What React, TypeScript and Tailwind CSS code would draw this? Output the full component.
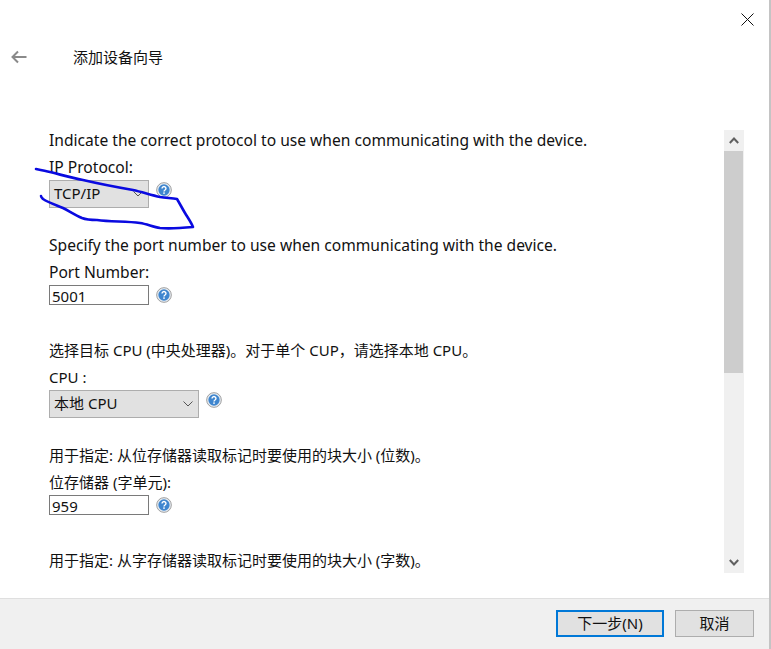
const FONT = "font-['Noto_Sans','Noto_Sans_CJK_SC',sans-serif]";

function HelpIcon() {
  return (
    <svg width="16" height="16" viewBox="0 0 17 17" className="mt-0.5 shrink-0">
      <circle cx="8.5" cy="8.5" r="7.8" fill="#e8eef4" stroke="#9a9a9a" strokeWidth="1" />
      <circle cx="8.5" cy="8.5" r="6" fill="#3f86cf" />
      <path d="M6.4 6.8a2.1 2 0 1 1 3.2 1.7c-.8.5-1.1.8-1.1 1.6" fill="none" stroke="#fff" strokeWidth="1.5" />
      <rect x="7.7" y="11" width="1.6" height="1.6" fill="#fff" />
    </svg>
  );
}

function Chevron() {
  return (
    <svg width="10" height="6" viewBox="0 0 10 6" className="shrink-0">
      <path d="M0.5 0.5 5 5l4.5-4.5" fill="none" stroke="#555" strokeWidth="1" />
    </svg>
  );
}

function Select({ value, width }: { value: string; width: string }) {
  return (
    <div className={`flex h-7 items-center justify-between border border-[#adadad] bg-[#e1e1e1] pr-[5px] pl-1 ${width}`}>
      <span className="-mt-px">{value}</span>
      <Chevron />
    </div>
  );
}

function TextBox({ value }: { value: string }) {
  return (
    <div className="flex h-5 w-[100px] items-center border border-[#7a7a7a] bg-white pt-0.5 pl-0.5">
      {value}
    </div>
  );
}

function Field({
  hint,
  label,
  control,
  className,
  latin,
}: {
  hint: string;
  label: string;
  control: React.ReactNode;
  className: string;
  latin?: boolean;
}) {
  return (
    <div className={className}>
      <p className={`h-[27px] leading-[27px] ${latin ? 'text-[15.6px]' : ''}`}>{hint}</p>
      <p className={`h-[26px] leading-[27px] ${latin ? 'text-[15.6px]' : ''}`}>{label}</p>
      {control}
    </div>
  );
}

export default function App() {
  return (
    <div className={`relative flex h-[649px] w-[771px] flex-col overflow-hidden border-r-2 border-[#c4c4c4] bg-white text-[15px] text-[#111] ${FONT}`}>
      <header className="flex h-[127px] shrink-0 items-start">
        <svg width="16" height="14" viewBox="0 0 16 14" className="mt-[50px] ml-[11px]">
          <path d="M15.500 7H1.500M7 1.500 1.500 7 7 12.500" fill="none" stroke="#8a8a8a" strokeWidth="2" />
        </svg>
        <h1 className="mt-[45px] ml-[46px] text-[15px] leading-[24px] font-normal">添加设备向导</h1>
        <svg width="13" height="13" viewBox="0 0 13 13" className="mt-[13px] mr-[15px] ml-auto">
          <path d="M.5.5l12 12M12.500.5l-12 12" fill="none" stroke="#111" strokeWidth="1" />
        </svg>
      </header>

      <div className="flex min-h-0 flex-1 pb-[25px]">
        <main className="w-[724px] shrink-0 overflow-hidden pl-[49px]">
          <Field
            className="pt-0"
            latin
            hint="Indicate the correct protocol to use when communicating with the device."
            label="IP Protocol:"
            control={
              <div className="flex items-start gap-[7px]">
                <Select value="TCP/IP" width="w-[100px]" />
                <HelpIcon />
              </div>
            }
          />
          <Field
            className="mt-[24px]"
            latin
            hint="Specify the port number to use when communicating with the device."
            label="Port Number:"
            control={
              <div className="flex items-start gap-[7px]">
                <TextBox value="5001" />
                <HelpIcon />
              </div>
            }
          />
          <Field
            className="mt-[32px]"
            hint="选择目标 CPU (中央处理器)。对于单个 CUP，请选择本地 CPU。"
            label="CPU :"
            control={
              <div className="flex items-start gap-[7px]">
                <Select value="本地 CPU" width="w-[150px]" />
                <HelpIcon />
              </div>
            }
          />
          <Field
            className="mt-[24px]"
            hint="用于指定: 从位存储器读取标记时要使用的块大小 (位数)。"
            label="位存储器 (字单元):"
            control={
              <div className="flex items-start gap-[7px]">
                <TextBox value="959" />
                <HelpIcon />
              </div>
            }
          />
          <Field
            className="mt-[32px]"
            hint="用于指定: 从字存储器读取标记时要使用的块大小 (字数)。"
            label=""
            control={null}
          />
        </main>

        <div className="mt-[3px] flex w-5 shrink-0 flex-col bg-[#f0f0f0]">
          <div className="flex h-[21px] items-center justify-center">
            <svg width="10" height="7" viewBox="0 0 10 7">
              <path d="M.8 6 5 1.500 9.200 6" fill="none" stroke="#606060" strokeWidth="2" />
            </svg>
          </div>
          <div className="h-[222px] w-[19px] bg-[#cdcdcd]" />
          <div className="flex-1" />
          <div className="flex h-[21px] items-center justify-center">
            <svg width="10" height="7" viewBox="0 0 10 7">
              <path d="M.8 1 5 5.500 9.200 1" fill="none" stroke="#606060" strokeWidth="2" />
            </svg>
          </div>
        </div>
      </div>

      <footer className="flex h-[51px] shrink-0 items-start justify-end gap-[11px] border-t border-[#dfdfdf] bg-[#f0f0f0] pt-[11px] pr-[15px] text-[15px]">
        <button className="h-[27px] w-[108px] border-2 border-[#0078d7] bg-[#e1e1e1] leading-none">下一步(N)</button>
        <button className="h-[27px] w-[79px] border border-[#adadad] bg-[#e1e1e1] leading-none">取消</button>
      </footer>

      <svg width="771" height="649" viewBox="0 0 771 649" className="pointer-events-none absolute top-0 left-0">
        <path
          d="M36 169C41 170 46 171 50 172C62 175 72 178 83 180C100 184 116 187 133 190C142 192 151 195 160 197C166 198 172 198 177 199C180 204 182 208 185 213C188 218 191 222 193 227C182 228 171 229 160 228C153 227 147 224 140 223C126 221 111 222 97 220C92 220 87 220 82 218C75 215 69 211 63 208C56 205 49 203 43 199C42 198 41 197 41 196"
          fill="none"
          stroke="#0a0ae0"
          strokeWidth="2.6"
          strokeLinecap="round"
          strokeLinejoin="round"
        />
      </svg>
    </div>
  );
}
